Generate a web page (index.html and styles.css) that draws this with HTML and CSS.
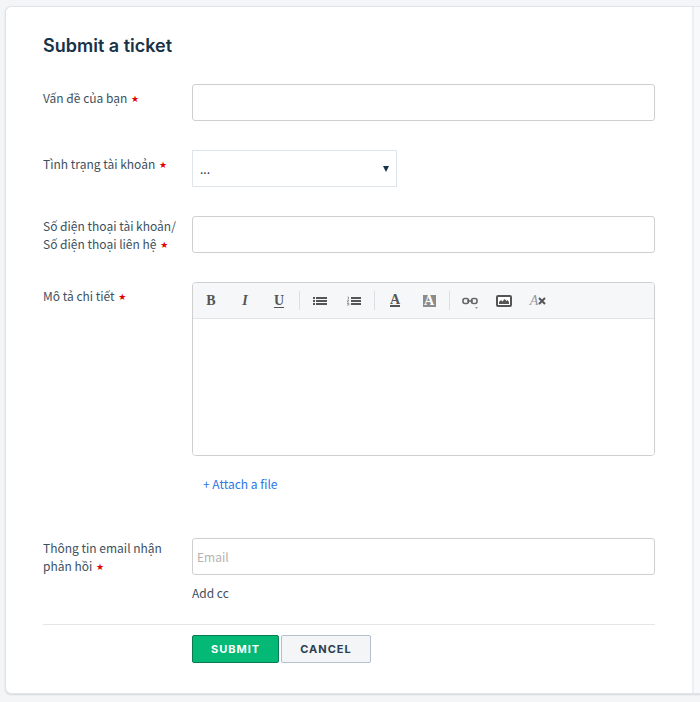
FILE: index.html
```
<!DOCTYPE html>
<html lang="vi">
<head>
  <meta charset="UTF-8" />
  <meta name="viewport" content="width=device-width, initial-scale=1.0" />
  <title>Submit a ticket</title>
  <link rel="stylesheet" href="styles.css">
</head>
<body>
  <div class="card">
    <main>
      <h1>Submit a ticket</h1>
      <form>
        <div class="row">
          <label for="subject">Vấn đề của bạn <span class="required">★</span></label>
          <input type="text" id="subject" />
        </div>
        <div class="row">
          <label for="status">Tình trạng tài khoản <span class="required">★</span></label>
          <div class="select-wrap">
            <select id="status">
              <option>...</option>
            </select>
            <svg class="caret" width="6" height="6" viewBox="0 0 6 6"><path d="M0 0h6L3 6z" fill="#183247"/></svg>
          </div>
        </div>
        <div class="row two-lines">
          <label for="phone">Số điện thoại tài khoản/<br>Số điện thoại liên hệ <span class="required">★</span></label>
          <input type="text" id="phone" />
        </div>
        <div class="row">
          <label for="details">Mô tả chi tiết <span class="required">★</span></label>
          <div>
            <div class="editor">
              <div class="toolbar">
                <button type="button" class="glyph" title="Bold">B</button>
                <button type="button" class="glyph italic" title="Italic">I</button>
                <button type="button" class="glyph underline" title="Underline">U</button>
                <span class="sep"></span>
                <button type="button" title="Bullet list">
                  <svg width="14" height="10" viewBox="0 0 14 10" fill="#555">
                    <path d="M0 1h2v2H0zM0 4h2v2H0zM0 7h2v2H0zM3 1h11v2H3zM3 4h11v2H3zM3 7h11v2H3z"/>
                  </svg>
                </button>
                <button type="button" title="Numbered list">
                  <svg width="14" height="10" viewBox="0 0 14 10" fill="#555">
                    <path d="M4 1h10v2H4zM4 4h10v2H4zM4 7h10v2H4z"/>
                    <path d="M0.500 1h1v2M0 4h2l-2 2h2M0 7.500h2v1.500H0" fill="none" stroke="#888" stroke-width=".8"/>
                  </svg>
                </button>
                <span class="sep"></span>
                <button type="button" class="glyph color" title="Text color"><span>A</span></button>
                <button type="button" class="glyph highlight" title="Background color"><span>A</span></button>
                <span class="sep"></span>
                <button type="button" title="Insert link">
                  <svg width="16" height="16" viewBox="0 0 16 16">
                    <rect x="1" y="5.500" width="5.500" height="5" rx="2" fill="none" stroke="#666" stroke-width="1.600"/>
                    <rect x="9.500" y="5.500" width="5.500" height="5" rx="2" fill="none" stroke="#666" stroke-width="1.600"/>
                    <path d="M5 8h6" stroke="#666" stroke-width="1.500"/>
                    <path d="M13 14h3l-1.500 2z" fill="#999"/>
                  </svg>
                </button>
                <button type="button" title="Insert image">
                  <svg width="16" height="12" viewBox="0 0 16 12">
                    <rect x="1" y="1" width="14" height="10" rx="1" fill="#fff" stroke="#555" stroke-width="2"/>
                    <path d="M3 9V7l2-2 1.500 1.500L8.500 4l2 2 1-1L13 7v2z" fill="#555"/>
                  </svg>
                </button>
                <button type="button" class="glyph clear" title="Clear formatting">
                  <span>A</span><svg width="8" height="8" viewBox="0 0 8 8"><path d="M1 1l6 6M7 1L1 7" stroke="#555" stroke-width="2"/></svg>
                </button>
              </div>
              <textarea id="details"></textarea>
            </div>
            <a class="attach" href="#">+ Attach a file</a>
          </div>
        </div>
        <div class="row two-lines email-row">
          <label for="email">Thông tin email nhận phản hồi <span class="required">★</span></label>
          <div>
            <input type="email" id="email" placeholder="Email" />
            <a class="add-cc" href="#">Add cc</a>
          </div>
        </div>
        <div class="actions">
          <button type="submit" class="btn submit">Submit</button>
          <button type="button" class="btn cancel">Cancel</button>
        </div>
      </form>
    </main>
    <aside></aside>
  </div>
</body>
</html>
```
FILE: styles.css
```
* {
  box-sizing: border-box;
}
body {
  margin: 0;
  padding: 6px 0 8px 5px;
  background: #f3f5f7;
  color: #3d5060;
  font-family: "Noto Sans CJK SC", sans-serif;
  font-size: 12px;
  line-height: 18px;
}
.card {
  display: flex;
  background: #fff;
  border: 1px solid #dfe4e8;
  border-right: none;
  border-radius: 6px 0 0 6px;
  box-shadow: 0 1px 2px rgba(0,0,0,0.12);
  overflow: hidden;
}
main {
  flex: 1;
  padding: 26px 37px 30px 37px;
}
aside {
  width: 8px;
  background: #f8f9fb;
  border-left: 2px solid #ebeff3;
}
h1 {
  margin: 0 0 26px;
  color: #183247;
  font-family: Inter, sans-serif;
  font-size: 18px;
  font-weight: 600;
  line-height: 25px;
}
.row {
  display: grid;
  grid-template-columns: 133px 1fr;
  column-gap: 16px;
  align-items: start;
  margin-bottom: 29px;
}
.row label {
  padding-top: 5px;
}
.two-lines label {
  padding-top: 1px;
}
.required {
  margin-left: 1px;
  color: #e00000;
  font-family: "DejaVu Sans", sans-serif;
  font-size: 9px;
  line-height: 1;
  vertical-align: 1px;
}
input, select {
  display: block;
  width: 100%;
  height: 37px;
  padding: 0 4px;
  background: #fff;
  border: 1px solid #cfcfcf;
  border-radius: 3px;
  color: #183247;
  font: inherit;
}
input::placeholder {
  color: #b3b3b3;
}
.select-wrap {
  position: relative;
  width: 205px;
}
select {
  appearance: none;
  padding-left: 7px;
  border-color: #dfe4e8;
  border-radius: 0;
}
.caret {
  position: absolute;
  right: 8px;
  top: 16px;
}
.editor {
  border: 1px solid #cfcfcf;
  border-radius: 4px;
  overflow: hidden;
}
.toolbar {
  display: flex;
  align-items: center;
  height: 36px;
  padding-left: 1px;
  background: #f6f7f9;
  border-bottom: 1px solid #e2e5e8;
}
.toolbar button {
  display: flex;
  align-items: center;
  justify-content: center;
  width: 34px;
  height: 30px;
  padding: 0;
  background: none;
  border: none;
  color: #555;
  cursor: pointer;
}
.toolbar .glyph {
  font-family: "Liberation Serif", serif;
  font-size: 14px;
  font-weight: bold;
}
.toolbar .italic {
  font-style: italic;
}
.toolbar .underline {
  text-decoration: underline;
  text-underline-offset: 2px;
}
.color span {
  border-bottom: 2px solid #555;
  line-height: 10px;
}
.highlight span {
  width: 13px;
  background: #8c8c8c;
  color: #fff;
  line-height: 12px;
}
.toolbar .clear {
  color: #999;
  font-style: italic;
  font-weight: normal;
}
.sep {
  width: 1px;
  height: 19px;
  margin: 0 3px;
  background: #dcdfe2;
}
textarea {
  display: block;
  width: 100%;
  height: 136px;
  padding: 8px;
  border: none;
  resize: none;
  font: inherit;
}
.attach {
  display: inline-block;
  margin: 19px 0 16px 11px;
  color: #2c76e5;
  text-decoration: none;
}
.email-row {
  margin-bottom: 22px;
}
.add-cc {
  display: inline-block;
  margin-top: 9px;
  color: #40505e;
  text-decoration: none;
}
.actions {
  display: flex;
  gap: 2px;
  padding: 10px 0 0 149px;
  border-top: 1px solid #e3e5e7;
}
.btn {
  height: 28px;
  padding: 0 18px;
  border-radius: 2px;
  font-family: Inter, sans-serif;
  font-size: 11px;
  font-weight: 700;
  letter-spacing: 1px;
  text-transform: uppercase;
  cursor: pointer;
}
.submit {
  background: #04b975;
  border: 1px solid #0a7a50;
  color: #fff;
}
.cancel {
  background: #f3f5f7;
  border: 1px solid #b4c0cf;
  color: #2c3e50;
}
```
